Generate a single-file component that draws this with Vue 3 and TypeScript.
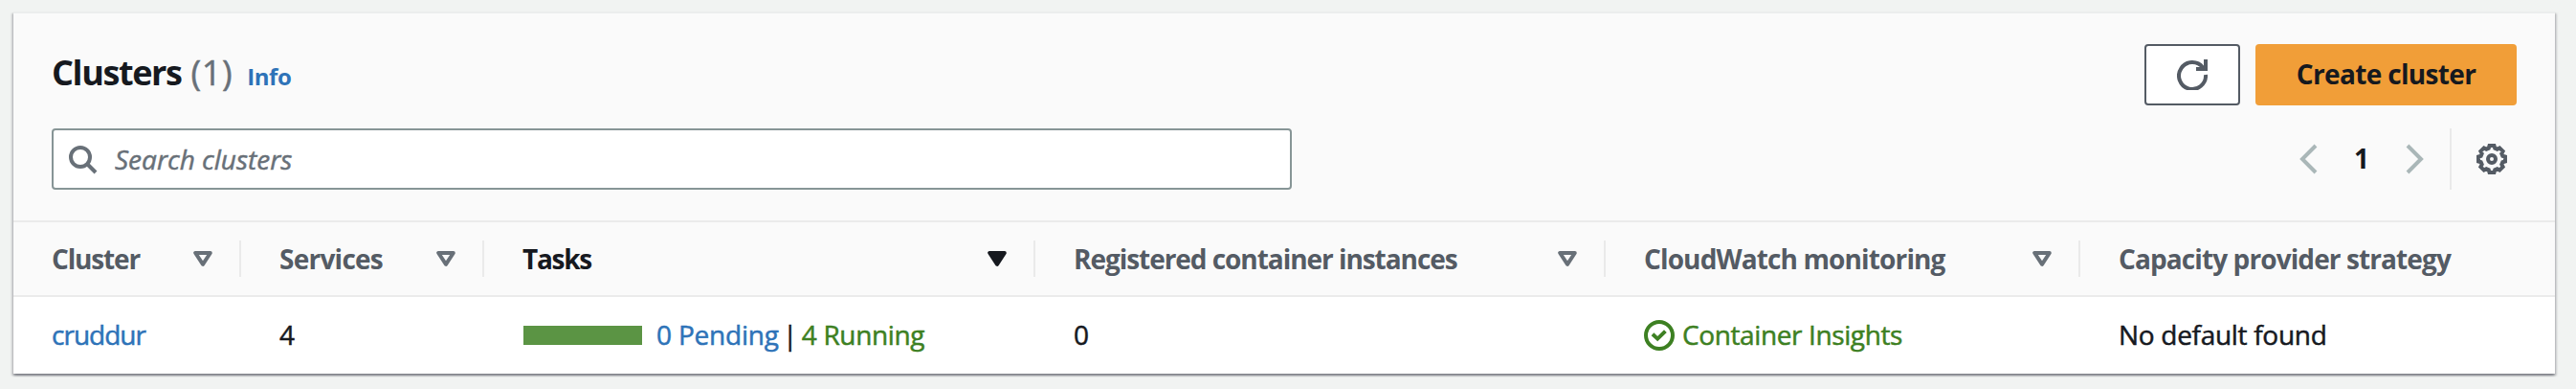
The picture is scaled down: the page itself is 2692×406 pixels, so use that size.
<script setup lang="ts">
interface Column {
  label: string
  width: number
  tracking: number
  sort?: 'none' | 'desc'
}

const columns: Column[] = [
  { label: 'Cluster', width: 238, tracking: -1.15, sort: 'none' },
  { label: 'Services', width: 254, tracking: -0.75, sort: 'none' },
  { label: 'Tasks', width: 576, tracking: -1.3, sort: 'desc' },
  { label: 'Registered container instances', width: 596, tracking: -1.05, sort: 'none' },
  { label: 'CloudWatch monitoring', width: 496, tracking: -0.87, sort: 'none' },
  { label: 'Capacity provider strategy', width: 496, tracking: -0.9 },
]

const gridColumns = columns.map((c) => `${c.width}px`).join(' ')

// Eight-toothed outline centred in a 32px box.
const gearPoints = Array.from({ length: 8 }, (_, i) => i * 45)
  .flatMap((a) => [
    [a - 10, 14.2],
    [a + 10, 14.2],
    [a + 16, 11.8],
    [a + 29, 11.8],
  ])
  .map(([deg, r]) => {
    const t = (deg * Math.PI) / 180
    return `${(16 + r * Math.sin(t)).toFixed(2)},${(16 - r * Math.cos(t)).toFixed(2)}`
  })
  .join(' ')
</script>

<template>
  <main class="page-body">
    <section class="panel">
      <header class="head">
        <div class="title-row">
          <h2 class="title">Clusters</h2>
          <span class="counter">(1)</span>
          <a class="info">Info</a>
          <div class="actions">
            <button class="btn refresh" aria-label="Refresh">
              <svg width="32" height="32" viewBox="0 0 32 32" fill="none" stroke="currentColor" stroke-width="4">
                <path d="M30 16A14 14 0 1 1 27.2 8.6" />
                <path d="M30 0V10H20" />
              </svg>
            </button>
            <button class="btn primary">Create cluster</button>
          </div>
        </div>

        <div class="tools">
          <div class="search">
            <svg width="32" height="32" viewBox="0 0 32 32" fill="none" stroke="currentColor" stroke-width="4">
              <circle cx="14" cy="14" r="10" />
              <path d="M20.5 20.5L30 30" />
            </svg>
            <span class="placeholder">Search clusters</span>
          </div>
          <div class="pager">
            <svg width="20" height="32" viewBox="0 0 20 32" fill="none" stroke="currentColor" stroke-width="4">
              <path d="M18 2L4 16L18 30" />
            </svg>
            <span class="page">1</span>
            <svg width="20" height="32" viewBox="0 0 20 32" fill="none" stroke="currentColor" stroke-width="4">
              <path d="M2 2L16 16L2 30" />
            </svg>
          </div>
          <div class="settings">
            <svg width="32" height="32" viewBox="0 0 32 32" fill="none" stroke="currentColor" stroke-width="4">
              <polygon :points="gearPoints" />
              <circle cx="16" cy="16" r="4" />
            </svg>
          </div>
        </div>
      </header>

      <div class="row header-row" :style="{ gridTemplateColumns: gridColumns }">
        <div v-for="c in columns" :key="c.label" class="th" :class="{ sorted: c.sort === 'desc' }">
          <span class="label" :style="{ letterSpacing: c.tracking + 'px' }">{{ c.label }}</span>
          <svg v-if="c.sort" class="caret" width="20" height="16" viewBox="0 0 20 16" :fill="c.sort === 'desc' ? 'currentColor' : 'none'" stroke="currentColor" stroke-width="4" stroke-linejoin="round">
            <path d="M2.2 2H17.8L10 13.8Z" />
          </svg>
        </div>
      </div>

      <div class="row body-row" :style="{ gridTemplateColumns: gridColumns }">
        <div class="td"><a class="link name">cruddur</a></div>
        <div class="td"><span>4</span></div>
        <div class="td">
          <span class="bar"></span>
          <span class="link pending">0 Pending</span>
          <span class="sep">|</span>
          <span class="ok running">4 Running</span>
        </div>
        <div class="td"><span>0</span></div>
        <div class="td ok">
          <svg width="32" height="32" viewBox="0 0 32 32" fill="none" stroke="currentColor" stroke-width="4">
            <circle cx="16" cy="16" r="14" />
            <path d="M9 14.8L14.2 19.6L22.4 11.6" />
          </svg>
          <span class="insights">Container Insights</span>
        </div>
        <div class="td"><span class="strategy">No default found</span></div>
      </div>
    </section>
  </main>
</template>

<style>
body {
  background: #f1f3f2;
}
</style>

<style scoped>
.page-body {
  box-sizing: border-box;
  height: 406px;
  padding: 12px 22px 16px 14px;
  background: #f1f3f2;
}
.panel {
  box-sizing: border-box;
  height: 378px;
  display: flex;
  flex-direction: column;
  font: 28px/36px 'Open Sans', 'Noto Sans', sans-serif;
  color: #16191f;
  white-space: nowrap;
  border-top: 2px solid #ebeded;
  background: #fff;
  box-shadow:
    0 2px 2px 0 rgba(0, 7, 22, 0.3),
    2px 2px 2px 0 rgba(0, 7, 22, 0.15),
    -2px 2px 2px 0 rgba(0, 7, 22, 0.15);
}
svg {
  display: block;
  flex: none;
}
.head {
  box-sizing: border-box;
  height: 218px;
  padding: 32px 40px 0;
  background: #fafafa;
  border-bottom: 2px solid #ebebeb;
}
.title-row {
  display: flex;
  align-items: baseline;
  height: 64px;
}
.title {
  margin: 0;
  font-size: 36px;
  line-height: 60px;
  font-weight: 700;
  letter-spacing: -1.39px;
}
.counter {
  margin-left: 10px;
  font-size: 36px;
  letter-spacing: 0.65px;
  color: #687078;
  -webkit-text-stroke: 0.5px currentColor;
}
.info {
  margin-left: 15px;
  font-size: 24px;
  font-weight: 700;
  letter-spacing: -0.44px;
  color: #2e73b8;
}
.actions {
  display: flex;
  align-self: flex-start;
  gap: 16px;
  margin-left: auto;
}
.btn {
  box-sizing: border-box;
  display: flex;
  align-items: center;
  justify-content: center;
  height: 64px;
  border-radius: 4px;
  font: inherit;
  font-weight: 700;
}
.refresh {
  width: 100px;
  padding: 0;
  background: #fff;
  border: 2px solid #545b64;
  color: #545b64;
}
.primary {
  width: 273px;
  padding: 0 0 2px;
  border: 0;
  background: #f19e38;
  color: #16191f;
  letter-spacing: -0.66px;
}
.tools {
  display: flex;
  height: 64px;
  margin-top: 24px;
}
.search {
  box-sizing: border-box;
  display: flex;
  align-items: center;
  gap: 18px;
  width: 1296px;
  padding-left: 14px;
  background: #fff;
  border: 2px solid #879596;
  border-radius: 4px;
  color: #687078;
}
.placeholder {
  font-style: italic;
  -webkit-text-stroke: 0.5px currentColor;
}
.pager {
  display: flex;
  align-items: center;
  margin-left: auto;
  color: #aab7b8;
}
.page {
  width: 92px;
  padding-bottom: 2px;
  text-align: center;
  font-weight: 700;
  color: #16191f;
}
.settings {
  box-sizing: border-box;
  display: flex;
  align-items: center;
  width: 70px;
  margin-left: 26px;
  padding-left: 26px;
  border-left: 2px solid #eaeaea;
  color: #545b64;
}
.row {
  display: grid;
}
.header-row {
  height: 76px;
  background: #fafafa;
  border-bottom: 2px solid #ebebeb;
  align-items: center;
}
.th {
  box-sizing: border-box;
  display: flex;
  align-items: center;
  height: 38px;
  padding: 0 28px 0 40px;
  border-right: 2px solid #eaeaea;
  font-weight: 700;
  color: #545b64;
}
.th:last-child {
  border-right: 0;
}
.label {
  padding-bottom: 1px;
}
.caret {
  margin-left: auto;
  color: #687078;
}
.sorted,
.sorted .caret {
  color: #16191f;
}
.body-row {
  height: 80px;
}
.td {
  box-sizing: border-box;
  display: flex;
  align-items: center;
  padding-left: 40px;
  -webkit-text-stroke: 0.5px currentColor;
}
.td > span:not(.bar),
.td > a {
  padding-bottom: 2px;
}
.link {
  color: #2e73b8;
  -webkit-text-stroke-color: #2e73b8;
}
.ok {
  color: #3d8022;
  -webkit-text-stroke-color: #3d8022;
}
.name {
  letter-spacing: -0.99px;
}
.bar {
  width: 124px;
  height: 20px;
  margin: 0 15px 0 1px;
  background: #5b9444;
}
.pending {
  letter-spacing: -0.2px;
}
.sep {
  width: 24px;
  text-align: center;
}
.running {
  letter-spacing: -0.35px;
}
.insights {
  margin-left: 8px;
  letter-spacing: -0.39px;
}
.strategy {
  letter-spacing: -0.3px;
}
</style>
